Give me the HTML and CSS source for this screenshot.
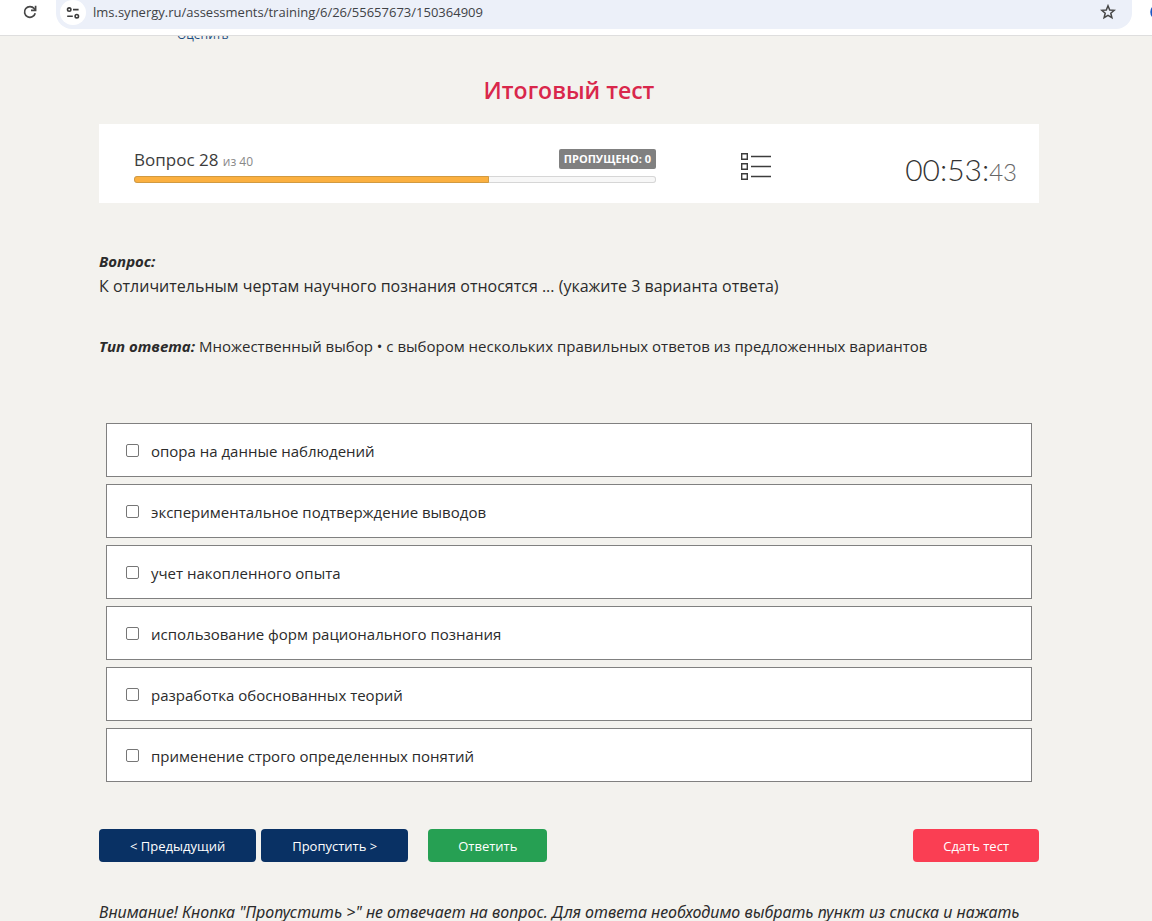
FILE: index.html
```html
<!DOCTYPE html>
<html lang="ru">
<head>
<meta charset="utf-8">
<title>Итоговый тест</title>
<link rel="stylesheet" href="styles.css">
</head>
<body>
<header class="browser">
  <button class="icon-button" type="button" aria-label="Обновить">
    <svg width="16" height="16" viewBox="0 0 16 16" fill="none" stroke="#474747" stroke-width="1.7"><path d="M13.2 9.2A5.4 5.4 0 1 1 12.2 4.6L13.4 6"/><path d="M13.6 1.8v4.6H9"/></svg>
  </button>
  <div class="address">
    <button class="site-info" type="button" aria-label="Сведения о сайте">
      <svg width="14" height="14" viewBox="0 0 14 14" fill="none" stroke="#3c3c3c" stroke-width="1.6"><circle cx="3.2" cy="3.6" r="1.7"/><path d="M7 3.6h5.6M1.2 10.2h5.6"/><circle cx="10.8" cy="10.2" r="1.7"/></svg>
    </button>
    <input class="url" type="text" aria-label="Адрес" value="lms.synergy.ru/assessments/training/6/26/55657673/150364909">
    <button class="icon-button" type="button" aria-label="В закладки">
      <svg width="16" height="16" viewBox="0 0 16 16" fill="none" stroke="#474747" stroke-width="1.5"><path d="M8 1.8l1.7 4.2 4.6.3-3.5 2.9 1.1 4.5L8 11.3l-3.9 2.4 1.1-4.5L1.7 6.3l4.6-.3z"/></svg>
    </button>
  </div>
  <svg class="extension" width="20" height="20" viewBox="0 0 20 20" fill="none" stroke="#1a56c4" stroke-width="2.5"><circle cx="10" cy="10" r="6.5"/></svg>
</header>
<div class="page">
  <main class="content">
    <nav class="subnav"><a class="rate" href="#">Оценить</a></nav>
    <h1 class="title">Итоговый тест</h1>
    <section class="status">
      <div class="progress-block">
        <div class="progress-head">
          <div class="counter">Вопрос 28 <span class="total">из 40</span></div>
          <span class="skipped">ПРОПУЩЕНО: 0</span>
        </div>
        <div class="track"><div class="fill" style="width:68%"></div></div>
      </div>
      <button class="list-button" type="button" aria-label="Список вопросов">
        <svg width="32" height="30" viewBox="0 0 32 30" fill="none" stroke="#3c3c3c"><path stroke-width="1.4" d="M1.7 1.7h5.6v5.6H1.7zM1.7 11.7h5.6v5.6H1.7zM1.7 21.7h5.6v5.6H1.7z"/><path stroke-width="1.3" d="M11 4.5h20M11 14.5h20M11 24.5h20"/></svg>
      </button>
      <div class="timer">00:53:<span class="seconds">43</span></div>
    </section>
    <section class="question">
      <div class="label">Вопрос:</div>
      <p class="question-text">К отличительным чертам научного познания относятся ... (укажите 3 варианта ответа)</p>
      <p class="answer-type"><span class="label">Тип ответа:</span> Множественный выбор • с выбором нескольких правильных ответов из предложенных вариантов</p>
    </section>
    <form class="quiz">
      <div class="options">
        <label class="option"><input class="check" type="checkbox"><span class="option-text">опора на данные наблюдений</span></label>
        <label class="option"><input class="check" type="checkbox"><span class="option-text">экспериментальное подтверждение выводов</span></label>
        <label class="option"><input class="check" type="checkbox"><span class="option-text">учет накопленного опыта</span></label>
        <label class="option"><input class="check" type="checkbox"><span class="option-text">использование форм рационального познания</span></label>
        <label class="option"><input class="check" type="checkbox"><span class="option-text">разработка обоснованных теорий</span></label>
        <label class="option"><input class="check" type="checkbox"><span class="option-text">применение строго определенных понятий</span></label>
      </div>
      <div class="actions">
        <div class="pair">
          <button class="button step" type="button">&lt; Предыдущий</button>
          <button class="button step" type="button">Пропустить &gt;</button>
        </div>
        <button class="button answer" type="submit">Ответить</button>
        <button class="button finish" type="button">Сдать тест</button>
      </div>
    </form>
    <p class="note">Внимание! Кнопка "Пропустить &gt;" не отвечает на вопрос. Для ответа необходимо выбрать пункт из списка и нажать</p>
  </main>
</div>
</body>
</html>
```

FILE: styles.css
```css
* { box-sizing: border-box; }

body {
  margin: 0;
  height: 100vh;
  display: flex;
  flex-direction: column;
  overflow: hidden;
  background: #f3f2ee;
  color: #2b2b2b;
  font-family: "Open Sans", "Noto Sans", sans-serif;
  font-size: 15px;
}

button { font-family: inherit; cursor: pointer; }
p, h1 { margin: 0; }
svg { display: block; }

.browser {
  flex: none;
  height: 36px;
  display: flex;
  align-items: flex-start;
  overflow: hidden;
  padding-left: 18px;
  background: #fff;
  border-bottom: 1px solid #dedede;
}

.icon-button {
  flex: none;
  width: 24px;
  height: 24px;
  padding: 4px;
  border: 0;
  background: none;
}

.address {
  flex: 1;
  display: flex;
  align-items: flex-start;
  height: 29px;
  margin-left: 14px;
  padding: 0 12px 0 4px;
  background: #ecf0f9;
  border-radius: 0 0 16px 16px;
}

.site-info {
  flex: none;
  width: 26px;
  height: 25px;
  padding: 6px;
  border: 0;
  border-radius: 13px;
  background: #fff;
}

.url {
  flex: 1;
  min-width: 0;
  height: 24px;
  margin-left: 7px;
  padding: 0;
  border: 0;
  background: none;
  color: #3f4246;
  font-family: "Open Sans", "Noto Sans", sans-serif;
  font-size: 13px;
}

.extension { flex: none; margin: 2px -16px 0 16px; }

.page {
  flex: 1;
  min-height: 0;
  overflow: hidden;
  padding: 0 113px 0 99px;
}

.content { max-width: 1140px; margin: 0 auto; }

.subnav {
  height: 7px;
  display: flex;
  align-items: flex-end;
  padding-left: 78px;
}

.rate {
  color: #1d4d80;
  font-size: 12px;
  line-height: 16px;
  text-decoration: none;
}

.title {
  margin-top: 31px;
  color: #d9274b;
  font-size: 23px;
  font-weight: 600;
  line-height: 32px;
  text-align: center;
}

.status {
  display: flex;
  align-items: flex-start;
  margin-top: 18px;
  padding: 24px 22px 13px 35px;
  background: #fff;
}

.progress-block { width: 522px; }

.progress-head {
  display: flex;
  justify-content: space-between;
  align-items: flex-start;
  height: 28px;
}

.counter { font-size: 17px; line-height: 24px; color: #3c3c3c; }
.total { font-size: 12px; color: #888; }

.skipped {
  margin-top: 1px;
  padding: 0 5px;
  border-radius: 2px;
  background: #808080;
  color: #fff;
  font-size: 11px;
  font-weight: 700;
  line-height: 20px;
}

.track {
  height: 7px;
  border-radius: 3px;
  background: #f7f7f7;
  box-shadow: inset 0 0 0 1px #d6d6d6;
}

.fill {
  height: 7px;
  border: 1px solid #d19a41;
  border-radius: 3px 0 0 3px;
  background: #fbb040;
}

.list-button {
  margin: 4px 0 0 84px;
  padding: 0;
  border: 0;
  background: none;
}

.timer {
  height: 42px;
  margin-left: auto;
  color: #333;
  font-family: Lato, sans-serif;
  font-size: 30px;
  font-weight: 300;
  line-height: 42px;
}

.seconds { font-size: 24px; color: #666; }

.question { padding-top: 46px; }
.label { font-weight: 700; font-style: italic; line-height: 24px; }
.question-text { font-size: 16px; line-height: 26px; }
.answer-type { margin-top: 35px; line-height: 24px; }

.options {
  display: flex;
  flex-direction: column;
  gap: 7px;
  margin-top: 65px;
  padding: 0 7px;
}

.option {
  display: flex;
  align-items: center;
  gap: 12px;
  height: 54px;
  padding: 0 19px;
  border: 1px solid #808080;
  background: #fff;
}

.option-text { padding-top: 2px; }

.check {
  appearance: none;
  flex: none;
  width: 13px;
  height: 13px;
  margin: 0;
  border: 1px solid #767676;
  border-radius: 2px;
  background: #fff;
}

.check:checked { background: #093164; }

.actions { display: flex; gap: 20px; margin-top: 47px; }
.pair { display: flex; gap: 5px; }

.button {
  height: 33px;
  padding: 0 30px;
  border: 0;
  border-radius: 4px;
  background: #093164;
  color: #fff;
  font-size: 13px;
}

.step { padding: 0 31px; }
.answer { background: #26a053; }
.finish { margin-left: auto; background: #fa3e53; }

.note {
  margin-top: 38px;
  font-family: "Noto Sans", sans-serif;
  font-size: 16px;
  font-style: italic;
  line-height: 24px;
  white-space: nowrap;
}
```
